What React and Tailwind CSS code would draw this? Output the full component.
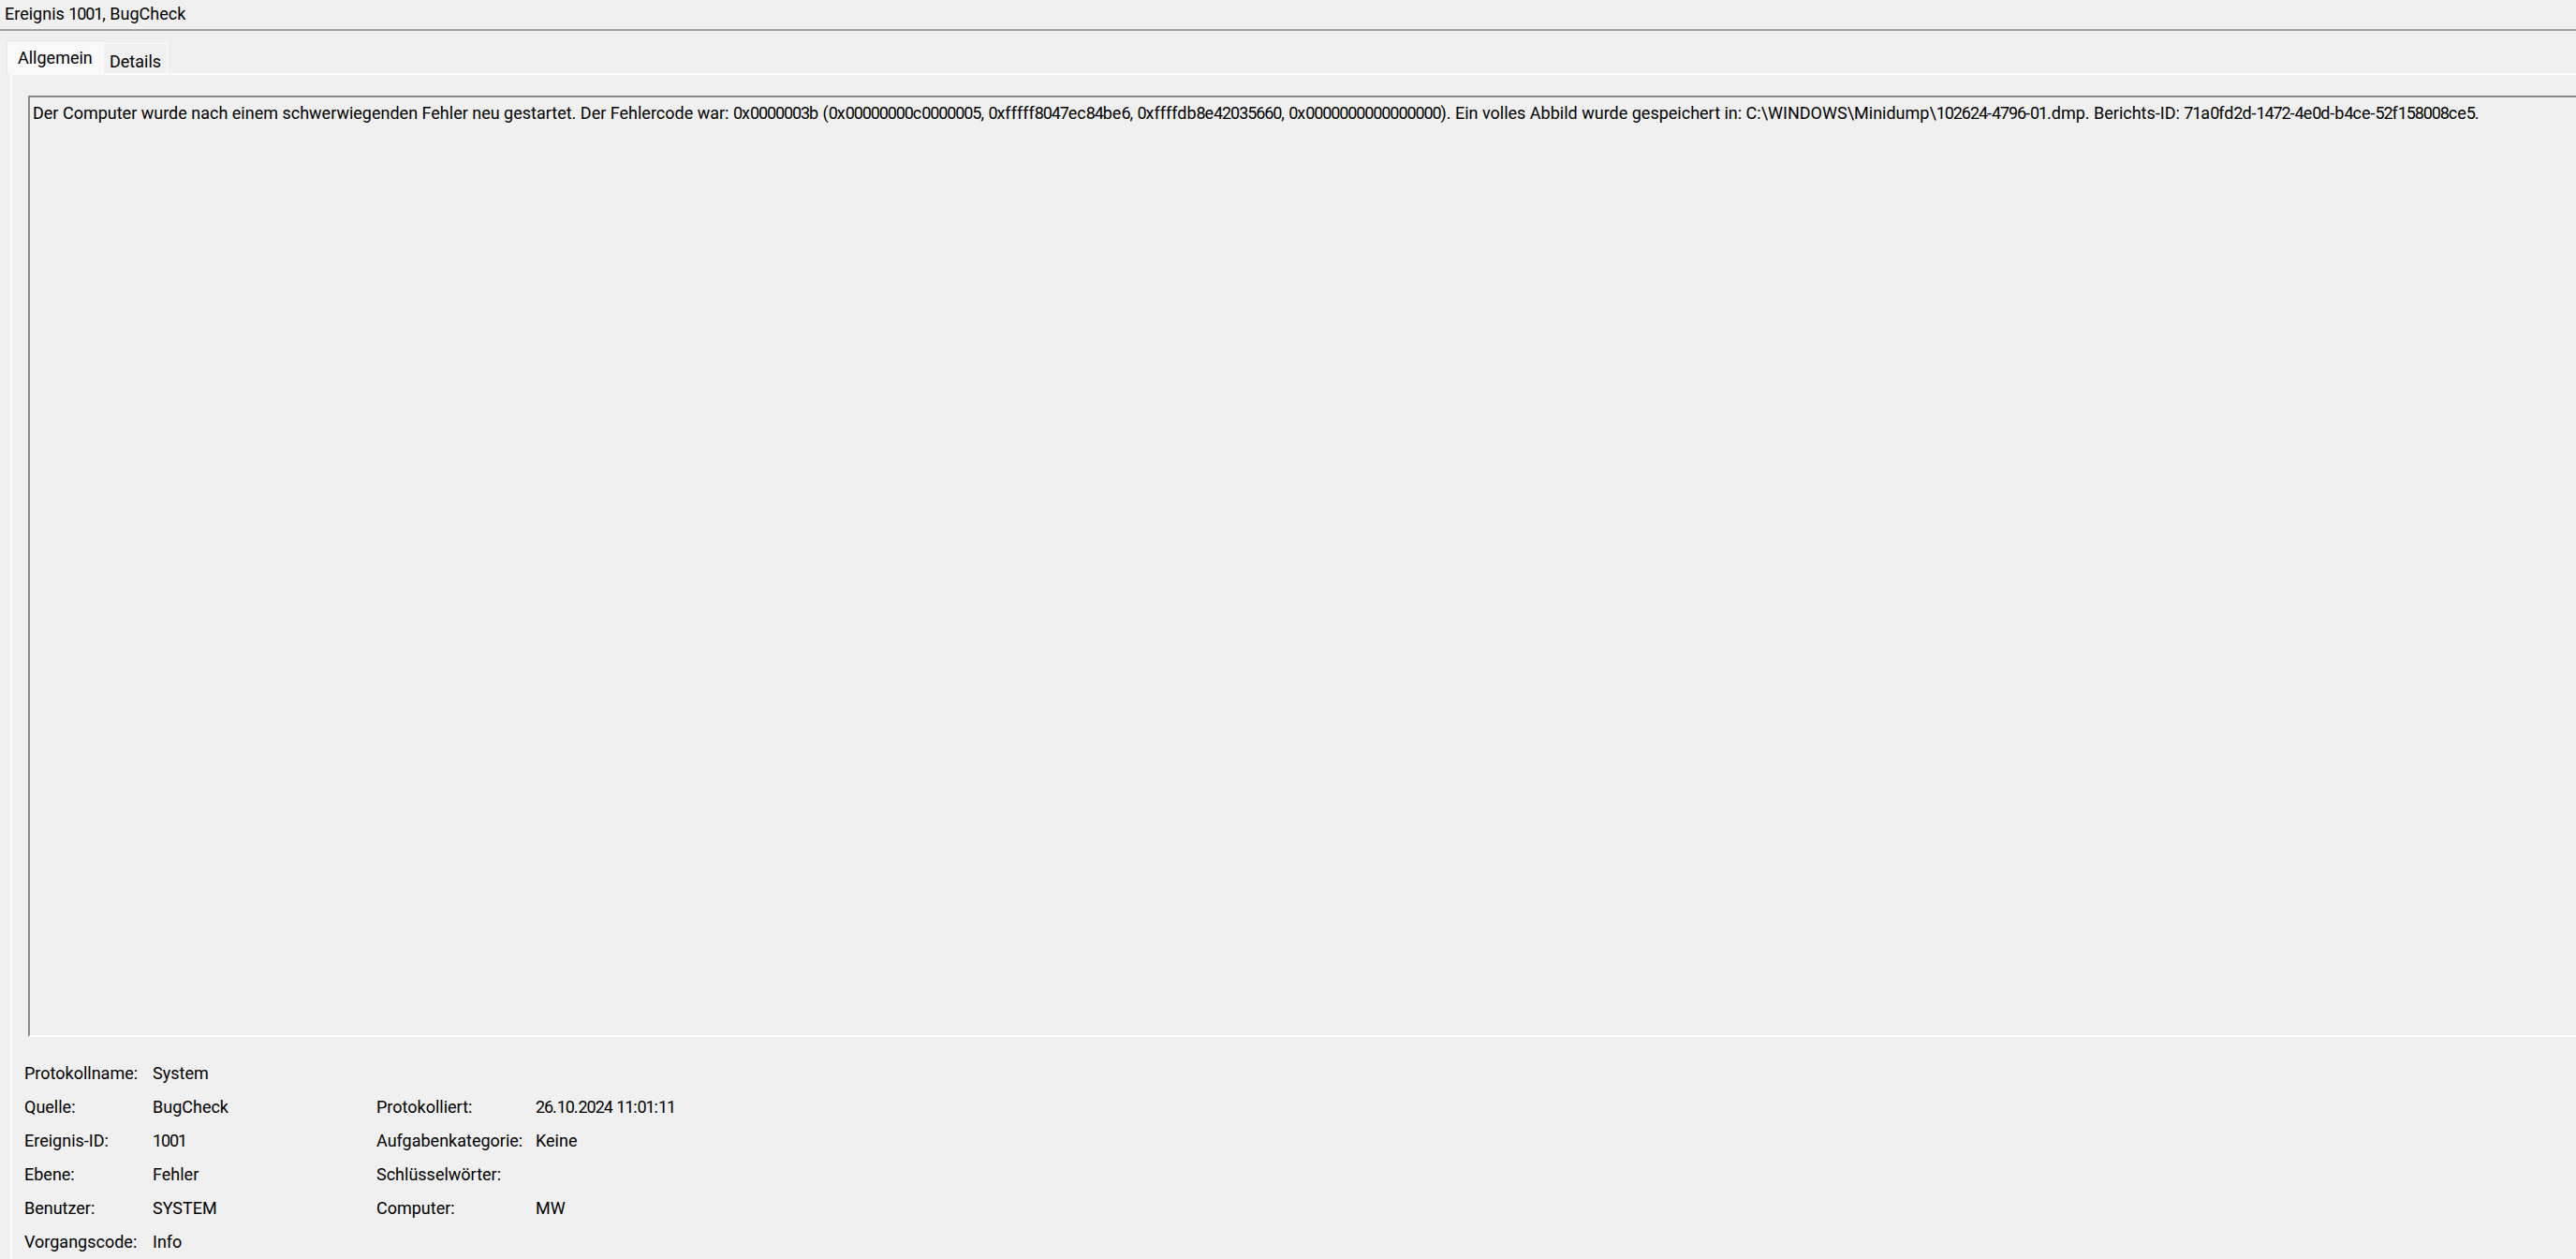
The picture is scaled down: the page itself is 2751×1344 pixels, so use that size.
import React from "react";

const message =
  "Der Computer wurde nach einem schwerwiegenden Fehler neu gestartet. Der Fehlercode war: 0x0000003b (0x00000000c0000005, 0xfffff8047ec84be6, 0xffffdb8e42035660, 0x0000000000000000). Ein volles Abbild wurde gespeichert in: C:\\WINDOWS\\Minidump\\102624-4796-01.dmp. Berichts-ID: 71a0fd2d-1472-4e0d-b4ce-52f158008ce5.";

// label / value pairs, left and right column
const rows = [
  ["Protokollname:", "System", "", ""],
  ["Quelle:", "BugCheck", "Protokolliert:", "26.10.2024 11:01:11"],
  ["Ereignis-ID:", "1001", "Aufgabenkategorie:", "Keine"],
  ["Ebene:", "Fehler", "Schlüsselwörter:", ""],
  ["Benutzer:", "SYSTEM", "Computer:", "MW"],
  ["Vorgangscode:", "Info", "", ""],
];

function Txt({ children }) {
  const parts = String(children).split(/(\d+)/);
  return parts.map((p, i) =>
    /^\d+$/.test(p) ? (
      <span key={i} className="tracking-[-1.1px]">
        {p}
      </span>
    ) : (
      <React.Fragment key={i}>{p}</React.Fragment>
    )
  );
}

function Tab({ label, active }) {
  if (active) {
    return (
      <div className="h-[35px] w-[104px] bg-[#f9f9f9] border-l border-t border-[#e6e6e6] pl-[11px] pt-[6px] leading-[24px]">
        {label}
      </div>
    );
  }
  return (
    <div className="h-[32px] w-[68px] bg-[#f0f0f0] border-t border-r border-[#fafafa] pl-[6px] pt-[7px] leading-[24px]">
      {label}
    </div>
  );
}

export default function App() {
  return (
    <div
      className="h-[1344px] w-full overflow-hidden bg-[#f0f0f0] text-[18px] text-black"
      style={{ fontFamily: "'Segoe UI', Roboto, 'Liberation Sans', sans-serif" }}
    >
      {/* window caption */}
      <div className="h-[31px] pl-[5px] pt-[3px] leading-[24px] whitespace-nowrap">
        <Txt>Ereignis 1001, BugCheck</Txt>
      </div>
      <div className="h-[2px] bg-[#a0a0a0]" />

      {/* tab strip */}
      <div className="flex items-end pl-[7px] pt-[10px]">
        <Tab label="Allgemein" active />
        <Tab label="Details" />
      </div>

      {/* tab page */}
      <div className="ml-[11px] border-l-2 border-t-2 border-[#fbfbfb] pl-[17px] pt-[22px]">
        <div className="-mr-4 h-[1005px] border-l-2 border-t-2 border-[#8a8a8a] border-b-2 border-b-[#fdfdfd] pl-[3px] pt-[5px]">
          <p className="leading-[24px] whitespace-nowrap">
            <Txt>{message}</Txt>
          </p>
        </div>

        <div className="mt-[21px] -ml-[4px] grid grid-cols-[137px_239px_170px_1fr] auto-rows-[36px] leading-[36px] whitespace-nowrap">
          {rows.map((r, i) => (
            <React.Fragment key={i}>
              <div>{r[0]}</div>
              <div>
                <Txt>{r[1]}</Txt>
              </div>
              <div>{r[2]}</div>
              <div>
                <Txt>{r[3]}</Txt>
              </div>
            </React.Fragment>
          ))}
        </div>
      </div>
    </div>
  );
}
